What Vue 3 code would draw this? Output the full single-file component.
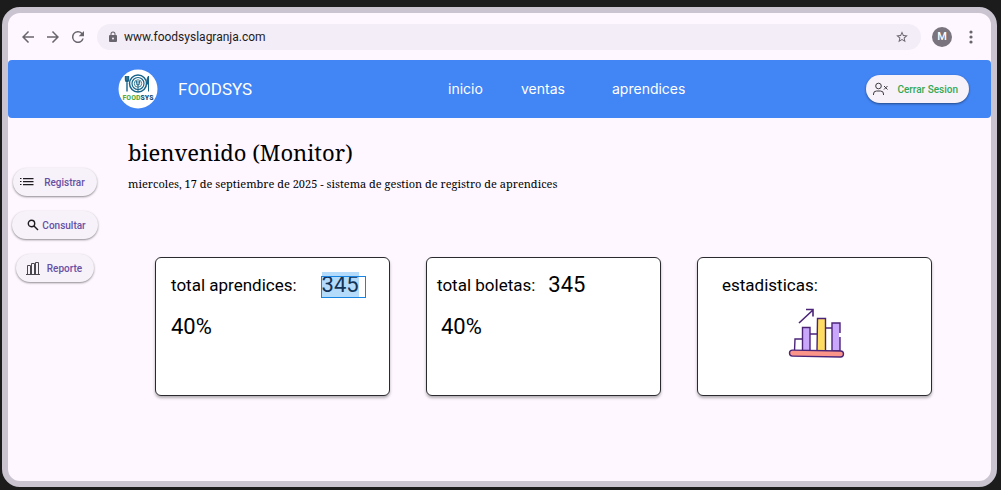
<script setup>
const links = ['inicio', 'ventas', 'aprendices']
</script>

<template>
  <div class="desk">
    <div class="window">
      <div class="toolbar">
        <button class="tool" aria-label="Atrás">
          <svg width="18" height="18" viewBox="0 0 24 24"><path d="M20 11H7.800l5.600-5.600L12 4l-8 8 8 8 1.400-1.400L7.800 13H20z" /></svg>
        </button>
        <button class="tool" aria-label="Adelante">
          <svg width="18" height="18" viewBox="0 0 24 24"><path d="M12 4l-1.400 1.400 5.600 5.600H4v2h12.200l-5.600 5.600L12 20l8-8z" /></svg>
        </button>
        <button class="tool" aria-label="Recargar">
          <svg width="18" height="18" viewBox="0 0 24 24"><path d="M17.650 6.350A8 8 0 1 0 19.730 14h-2.080A6 6 0 1 1 12 6c1.660 0 3.140.690 4.220 1.780L13 11h7V4z" /></svg>
        </button>
        <div class="address">
          <svg width="12" height="12" viewBox="0 0 24 24"><path d="M18 8h-1V6A5 5 0 0 0 7 6v2H6a2 2 0 0 0-2 2v10a2 2 0 0 0 2 2h12a2 2 0 0 0 2-2V10a2 2 0 0 0-2-2zm-6 9a2 2 0 1 1 0-4 2 2 0 0 1 0 4zM9 8V6a3 3 0 0 1 6 0v2z" /></svg>
          <input type="text" aria-label="Dirección" value="www.foodsyslagranja.com" />
          <button class="star" aria-label="Favorito">
            <svg width="14" height="14" viewBox="0 0 24 24"><path d="M22 9.240l-7.190-.620L12 2 9.190 8.630 2 9.240l5.460 4.730L5.820 21 12 17.270 18.180 21l-1.630-7.030zM12 15.400l-3.760 2.270 1-4.280-3.320-2.880 4.380-.380L12 6.100l1.710 4.040 4.380.380-3.320 2.880 1 4.280z" /></svg>
          </button>
        </div>
        <button class="avatar" aria-label="Perfil">M</button>
        <button class="tool menu" aria-label="Menú">
          <svg width="16" height="16" viewBox="0 0 24 24"><circle cx="12" cy="4.500" r="2.400" /><circle cx="12" cy="12" r="2.400" /><circle cx="12" cy="19.500" r="2.400" /></svg>
        </button>
      </div>

      <header class="header">
        <svg class="logo" width="40" height="40" viewBox="0 0 40 40" role="img" aria-label="FoodSys">
          <circle cx="20" cy="20" r="19.500" fill="#fff" />
          <g fill="none" stroke="#17648a">
            <circle cx="20" cy="14.500" r="8.500" stroke-width="1.500" />
            <circle cx="20" cy="14.500" r="6" stroke-width="1.200" />
            <circle cx="20" cy="14.500" r="3.700" stroke="#3f8294" />
            <path d="M18.400 12v2.500q0 1.500 1.600 1.500t1.600-1.500V12M20 12v11" />
            <path d="M7.500 7v4q0 1.500 1.500 1.500t1.500-1.500V7M9 7v15.500" stroke-width="1.400" />
            <path d="M30.500 22.500V7q-2 2-1.500 8h1.500" fill="#17648a" />
          </g>
          <text x="20" y="31" text-anchor="middle" class="logo-text"><tspan fill="#55ad45">FOOD</tspan><tspan fill="#174b72">SYS</tspan></text>
        </svg>
        <span class="brand">FOODSYS</span>
        <nav class="nav">
          <a v-for="link in links" :key="link" href="#">{{ link }}</a>
        </nav>
        <button class="pill logout">
          <svg width="17" height="14" viewBox="0 0 17 14" fill="none" stroke="#3c3940"><circle cx="6.500" cy="4" r="2.800" /><path d="M1.500 13v-1q0-3 3-3h4q3 0 3 3v1M12 4l3.500 3.500M15.500 4L12 7.500" /></svg>
          Cerrar Sesion
        </button>
      </header>

      <div class="body">
        <aside class="side">
          <button class="pill registrar">
            <svg width="14" height="10" viewBox="0 0 14 10"><path d="M0 1h1.500v1H0zM3 1h10.500v1.200H3zM0 4h1.500v1H0zM3 4h10.500v1.200H3zM0 7h1.500v1H0zM3 7h10.500v1.200H3z" fill="#1d1b20" /></svg>
            Registrar
          </button>
          <button class="pill consultar">
            <svg width="12" height="12" viewBox="0 0 12 12" fill="none" stroke="#1d1b20" stroke-width="1.400"><circle cx="4.500" cy="4.500" r="3.200" /><path d="M7 7l4 4" /></svg>
            Consultar
          </button>
          <button class="pill reporte">
            <svg width="14" height="14" viewBox="0 0 14 14" fill="none" stroke="#4a474e"><path d="M0 13.500h14M1.500 13V4.500h3V13M5.500 13V2.500h3V13M9.500 13V1.500h3V13" /></svg>
            Reporte
          </button>
        </aside>

        <main class="main">
          <h1>bienvenido (Monitor)</h1>
          <p class="date">miercoles, 17 de septiembre de 2025 - sistema de gestion de registro de aprendices</p>
          <div class="cards">
            <section class="card students">
              <div class="row"><h2>total aprendices:</h2><span class="figure selected">345</span></div>
              <p class="figure">40%</p>
            </section>
            <section class="card tickets">
              <div class="row"><h2>total boletas:</h2><span class="figure">345</span></div>
              <p class="figure">40%</p>
            </section>
            <section class="card stats">
              <div class="row"><h2>estadisticas:</h2></div>
              <svg class="chart" width="58" height="52" viewBox="0 0 58 52" stroke="#4b2478" stroke-width="1.400" fill="none">
                <path d="M11 17L25 4M18 3.500h7v7" stroke-width="1.600" />
                <path d="M6.500 45l.5-12h7M22 28h7M37 22h7" />
                <path d="M14.500 45V21.500h7.500V45z" fill="#c9a8fb" />
                <path d="M29 45l.5-32.500h8V45z" fill="#ffdd63" />
                <path d="M44 45V17h8v28z" fill="#c9a8fb" />
                <path d="M52 27v4" stroke="#fff" stroke-width="2" />
                <rect x="1.500" y="44.500" width="54" height="6" rx="3" fill="#fc9589" transform="rotate(1 28 47)" />
              </svg>
            </section>
          </div>
        </main>
      </div>
    </div>
  </div>
</template>

<style>
body { margin: 0; background: #1c1c1c; }
</style>

<style scoped>
* { box-sizing: border-box; }
.desk {
  min-height: 100vh;
  padding: 7px 4px 3px 2px;
  display: flex;
  background: #1c1c1c;
  font-family: Roboto, "Liberation Sans", sans-serif;
  color: #000;
}
.window {
  flex: 1;
  border: 6px solid #cac4d0;
  border-radius: 18px;
  background: #fef7ff;
}
button { border: 0; padding: 0; font-family: inherit; cursor: pointer; }
.toolbar {
  height: 47px;
  padding: 0 8px 0 7px;
  display: flex;
  align-items: center;
}
.tool { width: 25px; height: 24px; display: grid; place-items: center; background: none; }
.tool svg { display: block; fill: #69656e; }
.address {
  flex: 1;
  height: 26px;
  margin: 0 11px 0 7px;
  padding: 0 12px 0 10px;
  display: flex;
  align-items: center;
  gap: 5px;
  border-radius: 13px;
  background: #f3edf7;
  fill: #69656e;
}
.address input {
  flex: 1;
  min-width: 0;
  border: 0;
  padding: 0;
  background: none;
  outline: none;
  font: 12px Roboto, sans-serif;
  color: #1d1b20;
}
.star { display: flex; background: none; fill: #69656e; }
.avatar {
  width: 20px;
  height: 20px;
  border-radius: 50%;
  background: #79747e;
  color: #fff;
  font-size: 11px;
  font-weight: 500;
}
.menu { margin-left: 6px; }
.header {
  height: 58px;
  padding: 0 22px 0 110px;
  display: flex;
  align-items: center;
  border-radius: 4px;
  background: #4285f4;
  color: #fff;
}
.logo-text { font: 700 8px "Roboto Condensed", "Liberation Sans Narrow", "Open Sans Condensed", sans-serif; }
.brand { width: 290px; padding-left: 20px; font-size: 17px; line-height: 24px; }
.nav { flex: 1; display: grid; grid-template-columns: 73px 91px 1fr; font-family: Inter, sans-serif; font-size: 14px; line-height: 20px; }
.nav a { color: #fff; text-decoration: none; justify-self: start; }
.pill {
  height: 28px;
  display: flex;
  align-items: center;
  border-radius: 14px;
  background: #f7f2fa;
  box-shadow: 0 1px 2px rgba(0, 0, 0, 0.35), 0 1px 3px rgba(0, 0, 0, 0.12);
  color: #6750a4;
  font-size: 10px;
  font-weight: 500;
  white-space: nowrap;
}
.logout { padding: 0 11px 0 6px; gap: 8px; color: #34a853; }
.body { display: flex; }
.side {
  width: 94px;
  padding-top: 50px;
  display: flex;
  flex-direction: column;
  align-items: center;
  gap: 15px;
}
.registrar { padding: 0 12px 0 7px; gap: 10px; }
.consultar { padding: 0 12px 0 15px; gap: 3px; }
.reporte { padding: 0 12px 0 10px; gap: 7px; }
.main { flex: 1; padding: 18px 59px 24px 26px; }
h1, .date {
  margin: 0;
  font-family: "Noto Serif", "DejaVu Serif Condensed", "DejaVu Serif", serif;
  font-weight: 400;
}
h1 { font-size: 22px; line-height: 32px; }
.date { margin-top: 8px; font-size: 11px; line-height: 16px; }
.cards { display: grid; grid-template-columns: repeat(3, 1fr); gap: 36px; margin: 65px 0 0 27px; }
.card {
  min-height: 139px;
  padding-top: 12px;
  border: 1px solid #2b2b2f;
  border-radius: 6px;
  background: #fff;
  box-shadow: 0 2px 3px rgba(0, 0, 0, 0.3);
}
.row { display: flex; align-items: center; height: 30px; }
h2 { margin: 0; font-size: 17px; font-weight: 400; line-height: 24px; white-space: nowrap; }
.figure { margin: 0; font-size: 22px; line-height: 26px; }
.card p { margin-top: 14px; }
.students { padding-left: 15px; }
.students .row { gap: 25px; }
.tickets { padding-left: 10px; }
.tickets .row { gap: 13px; }
.tickets p { padding-left: 4px; }
.stats { padding-left: 24px; }
.selected { position: relative; background: #b5dbfb; color: #123456; }
.selected::after {
  content: "";
  position: absolute;
  inset: 4px -7px 0 -1px;
  border: 1px solid #1684e0;
}
.chart { display: block; margin: 6px 0 0 66px; }
</style>
